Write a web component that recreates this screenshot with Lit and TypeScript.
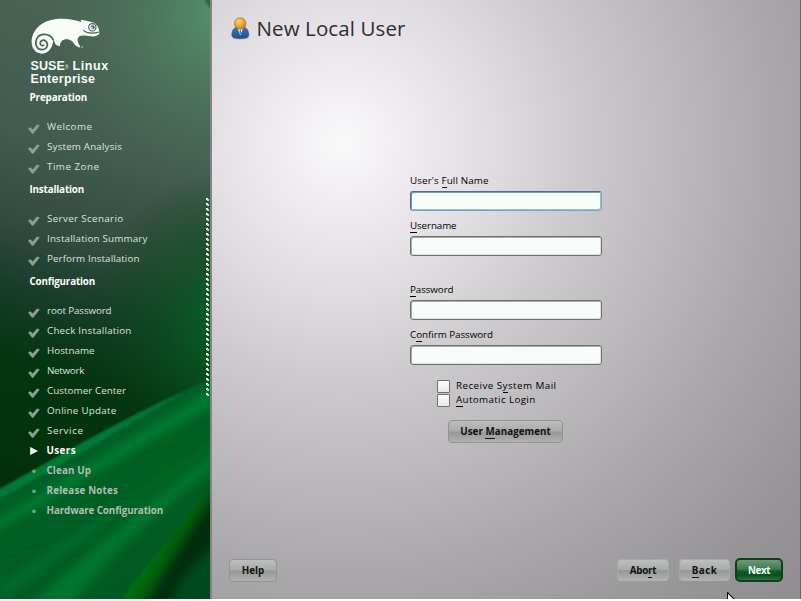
import { LitElement, html, css, svg } from "lit";
import { customElement, property } from "lit/decorators.js";
import { styleMap } from "lit/directives/style-map.js";

const ctx = document.createElement("canvas").getContext("2d")!;

/** Letter spacing that makes a text run reach the given width. */
function tracking(text: string, font: string, width: number): string {
  ctx.font = font;
  return `${((width - ctx.measureText(text).width) / text.length).toFixed(3)}px`;
}

/** Renders a label whose "_x" marks the accelerator letter. */
function mnemonic(label: string) {
  const i = label.indexOf("_");
  if (i < 0) return html`${label}`;
  return html`${label.slice(0, i)}<span class="key">${label[i + 1]}</span>${label.slice(i + 2)}`;
}

const plain = (label: string) => label.replace("_", "");
const FACE = '"Open Sans", "Noto Sans", sans-serif';

@customElement("fit-text")
class FitText extends LitElement {
  @property() label = "";
  @property({ type: Number }) width = 0;
  @property({ type: Number }) size = 10;
  @property({ type: Number }) weight = 400;

  static styles = css`
    :host { display: inline-block; white-space: pre; }
    .text { display: block; font-family: "Open Sans", "Noto Sans", sans-serif; line-height: 14px; }
    .key { position: relative; }
    .key::after {
      content: ""; position: absolute; left: 0; right: 0; bottom: -1px;
      height: 1px; background: currentColor;
    }
  `;

  render() {
    const font = `${this.weight} ${this.size}px ${FACE}`;
    return html`<span class="text" style=${styleMap({
      fontSize: `${this.size}px`,
      fontWeight: String(this.weight),
      letterSpacing: tracking(plain(this.label), font, this.width),
    })}>${mnemonic(this.label)}</span>`;
  }
}

type State = "done" | "current" | "todo";
interface Step { name: string; width: number; state: State }
interface Stage { name: string; width: number; steps: Step[] }

const step = (name: string, width: number, state: State = "done"): Step => ({ name, width, state });

const STAGES: Stage[] = [
  { name: "Preparation", width: 57.5, steps: [
    step("Welcome", 45.5), step("System Analysis", 75), step("Time Zone", 52.5),
  ] },
  { name: "Installation", width: 54.5, steps: [
    step("Server Scenario", 76.5), step("Installation Summary", 100.5), step("Perform Installation", 92.5),
  ] },
  { name: "Configuration", width: 65.5, steps: [
    step("root Password", 64.5), step("Check Installation", 84.5), step("Hostname", 47.5),
    step("Network", 37), step("Customer Center", 79), step("Online Update", 69.5),
    step("Service", 36.5), step("Users", 29.5, "current"), step("Clean Up", 44.5, "todo"),
    step("Release Notes", 71.5, "todo"), step("Hardware Configuration", 116.5, "todo"),
  ] },
];

const marks = {
  done: svg`<path d="M0 5.6 L2.4 4.2 L4.7 6.6 L9 1.4 L11.8 2.4 L5.2 10.8 L4 10.8 Z" fill="#8b9e92"/>`,
  current: svg`<path d="M2.2 2 L10 6 L2.2 10 Z" fill="#f6fbf7"/>`,
  todo: svg`<circle cx="6" cy="6.3" r="1.9" fill="#66a47d"/>`,
};

@customElement("brand-logo")
class BrandLogo extends LitElement {
  static styles = css`
    :host { display: block; height: 69px; }
    .beast { display: block; margin-left: 30px; }
    .name {
      margin: 5px 0 0 30.5px; color: #f8fcf9;
      font: bold 12.5px/13px "Liberation Sans", Arial, sans-serif;
    }
    .row { display: flex; height: 13px; letter-spacing: 0.1px; }
    .mark { font-size: 5px; opacity: 0.7; width: 4.5px; line-height: 14px; }
    .gap { margin-left: 3px; letter-spacing: 0.6px; }
    .edition { letter-spacing: 0.3px; }
  `;
  render() {
    return html`
      <svg class="beast" width="72" height="38" viewBox="90 51 216 114">
        <path fill="#f8fcf9" d="M95 127 C94 98 118 64 165 58 C195 54 222 59 244 66 L242 59 C256 61 264 63 271 65
          C288 68 298 80 298 98 C297 107 285 110 272 109 C258 108 247 104 238 109 C230 116 232 127 240 138
          L239 143 L229 138 C222 132 218 121 208 119 C194 114 179 122 180 139 L168 135 C163 129 165 124 160 121
          C158 142 146 161 127 161 C107 161 95 146 95 127 Z"/>
        <path fill="none" stroke="#476153" stroke-width="5" stroke-linecap="round"
          d="M160 120 C149 97 117 99 110 117 C103 134 112 150 127 149 C141 148 147 133 138 124 C130 116 119 123 121 132 C123 137 127 138 131 136"/>
        <path fill="none" stroke="#476153" stroke-width="3.4" d="M250 91 C262 101 280 101 297 96"/>
        <circle cx="277" cy="82" r="11" fill="none" stroke="#476153" stroke-width="3.4"/>
        <circle cx="278" cy="82" r="6" fill="#476153"/>
        <circle cx="276" cy="83" r="2.6" fill="#f8fcf9"/>
        <circle cx="246" cy="141" r="2.4" fill="#c5d0c9"/>
      </svg>
      <div class="name">
        <div class="row"><span>SUSE</span><span class="mark">®</span><span class="gap">Linux</span></div>
        <div class="edition">Enterprise</div>
      </div>
    `;
  }
}

@customElement("step-list")
class StepList extends LitElement {
  static styles = css`
    :host { display: block; }
    .stage { display: flex; align-items: center; height: 26px; padding: 0 0 6px 29.5px; color: #fff; }
    .step { display: flex; align-items: center; height: 20px; padding-left: 28px; color: #dbe4de; }
    .mark { width: 12px; height: 12px; margin-right: 7px; flex: none; }
    .done .mark { margin-top: 3px; }
    .current { color: #fff; }
    .todo { color: #b4bcb5; }
    .current .mark, .todo .mark { margin-right: 6.5px; }
  `;
  render() {
    return STAGES.map((s) => html`
      <div class="stage"><fit-text .label=${s.name} .width=${s.width} .size=${9.8} .weight=${700}></fit-text></div>
      ${s.steps.map((t) => html`
        <div class="step ${t.state}">
          <svg class="mark" viewBox="0 0 12 12">${marks[t.state]}</svg>
          <fit-text .label=${t.name} .width=${t.width} .size=${9.8} .weight=${t.state === "done" ? 400 : 700}></fit-text>
        </div>`)}
    `);
  }
}

@customElement("side-scenery")
class SideScenery extends LitElement {
  static styles = css`:host, .art { display: block; }`;
  render() {
    return html`
      <svg class="art" width="210" height="599" viewBox="0 0 210 599">
        <defs>
          <linearGradient id="base" x1="0.1" y1="0" x2="0" y2="1">
            <stop offset="0" stop-color="#486353"/>
            <stop offset="0.22" stop-color="#415b4f"/>
            <stop offset="0.37" stop-color="#324b3e"/>
            <stop offset="0.48" stop-color="#173c2a"/>
            <stop offset="0.6" stop-color="#04350e"/>
            <stop offset="0.8" stop-color="#033008"/>
            <stop offset="1" stop-color="#00551e"/>
          </linearGradient>
          <radialGradient id="top" gradientUnits="userSpaceOnUse" cx="225" cy="15" r="190">
            <stop offset="0" stop-color="#52946a"/>
            <stop offset="0.35" stop-color="#517f63" stop-opacity="0.75"/>
            <stop offset="1" stop-color="#4d6a5a" stop-opacity="0"/>
          </radialGradient>
          <radialGradient id="side" gradientUnits="userSpaceOnUse" cx="240" cy="325" r="155">
            <stop offset="0" stop-color="#066624"/>
            <stop offset="0.35" stop-color="#045a1d" stop-opacity="0.7"/>
            <stop offset="1" stop-color="#03400f" stop-opacity="0"/>
          </radialGradient>
          <linearGradient id="hill" x1="0" y1="0" x2="0.5" y2="1">
            <stop offset="0" stop-color="#00652a"/>
            <stop offset="1" stop-color="#005a20"/>
          </linearGradient>
          <linearGradient id="fold" gradientUnits="userSpaceOnUse" x1="164" y1="540" x2="200" y2="562">
            <stop offset="0" stop-color="#006d12"/>
            <stop offset="0.3" stop-color="#005a0c"/>
            <stop offset="0.65" stop-color="#002f05"/>
            <stop offset="1" stop-color="#003d10"/>
          </linearGradient>
          <filter id="b1" x="-20%" y="-20%" width="140%" height="140%"><feGaussianBlur stdDeviation="1"/></filter>
          <filter id="b4" x="-20%" y="-20%" width="140%" height="140%"><feGaussianBlur stdDeviation="4"/></filter>
        </defs>
        <rect width="210" height="599" fill="url(#base)"/>
        <rect width="210" height="210" fill="url(#top)"/>
        <rect y="150" width="210" height="330" fill="url(#side)"/>
        <path d="M204 -2 C206 4 209 7 214 12 V-2 Z" fill="#2c6b41" filter="url(#b1)"/>
        <path d="M-5 492 C55 459 125 416 215 377 V605 H-5 Z" fill="url(#hill)" filter="url(#b1)"/>
        <path d="M-5 492 C55 459 120 420 185 392 C130 423 60 466 -5 501 Z" fill="#007a35" filter="url(#b1)"/>
        <path d="M-5 521 C60 482 130 440 215 387 V405 C150 440 70 490 -5 531 Z" fill="#007a32" filter="url(#b4)"/>
        <path d="M30 605 C80 558 140 510 215 450 V468 C150 518 105 560 72 605 Z" fill="#00742f" filter="url(#b4)"/>
        <path d="M-5 588 C60 540 130 500 215 440 V447 C150 492 90 535 5 600 Z" fill="#00692a" filter="url(#b4)"/>
        <path d="M118 605 C150 560 180 525 215 481 V605 Z" fill="url(#fold)" filter="url(#b1)"/>
        <path d="M148 605 C170 570 190 535 215 510 V605 Z" fill="#002f0a" filter="url(#b4)"/>
        <path d="M165 612 C180 580 195 556 220 544 V612 Z" fill="#004a1c" filter="url(#b4)"/>
      </svg>`;
  }
}

@customElement("push-button")
class PushButton extends LitElement {
  @property() label = "";
  @property({ type: Number }) width = 0;
  @property() tone = "plain";

  static styles = css`
    :host { display: block; }
    .button {
      box-sizing: border-box; width: 100%; height: 23px; padding: 1px 0 0; display: flex;
      align-items: center; justify-content: center; color: #101211;
      border: 1px solid #929593; border-radius: 4px;
      background: linear-gradient(#bcbfbd, #a9acaa 48%, #959997 52%, #a3a6a4 80%, #b0b3b1);
    }
    .soft { border-color: #a8aaa9 #a7a9a8 #b0b3b1; height: 22px; padding-top: 2px; }
    .primary {
      height: 24px; color: #f4fbf5; border: 2px solid #123f10; border-radius: 5px;
      background: linear-gradient(#6a9a77, #3d7c50 45%, #125a2a 55%, #07501f 75%, #2b6f42);
    }
  `;
  render() {
    return html`<button class="button ${this.tone}">
      <fit-text .label=${this.label} .width=${this.width} .size=${9.8} .weight=${700}></fit-text>
    </button>`;
  }
}

@customElement("app-root")
class AppRoot extends LitElement {
  static styles = css`
    :host { display: block; width: 801px; height: 601px; overflow: hidden; background: #fff; }
    .screen { position: relative; display: flex; box-sizing: border-box; width: 801px; height: 599px; border-right: 1px solid #4c6f7c; overflow: hidden; }
    .side { position: relative; width: 210px; height: 599px; flex: none; border-right: 2px solid #858186; }
    .scenery { position: absolute; inset: 0; }
    .nav { position: relative; padding-top: 17px; }
    .steps { margin-top: -1px; }
    .dots { position: absolute; left: 206px; top: 198px; display: block; }
    .main {
      flex: 1; min-width: 0; display: flex; flex-direction: column;
      background: radial-gradient(circle at 130px 142px, #f8faf9 0, #f5f3f7 30px, #ebe7ec 90px, #dfdce0 155px, #cccacd 240px, #bcbabd 330px, #aaa8ab 430px, #989598 560px, #8e8b8e 680px);
    }
    .title { display: flex; align-items: center; height: 57px; padding-left: 18px; color: #2d2e2f; }
    .heading { margin: 0 0 2px; }
    .person { width: 20px; height: 23px; margin: 0 6.5px 1px 0; }
    .form { width: 192px; margin: 117px 0 0 198px; }
    .label { height: 14px; display: flex; margin-bottom: 3px; }
    .field {
      display: block; box-sizing: border-box; width: 192px; height: 20px; margin: 0 0 8px;
      border: 1px solid #6f6e70; border-radius: 3px; background: #f7fcf8; padding: 0 3px; outline: none;
      box-shadow: inset 1px 1px 0 #a9abaa, inset -1px -1px 0 #dfe2e0;
    }
    .focused { border-color: #4a6f92 #7fa0c0 #7c9fbf #4a6f92; box-shadow: inset 1px 1px 0 #6f9ac0, inset -1px -1px 0 #9dbcd6; }
    .spaced { margin-bottom: 27px; }
    .checks { margin: 14px 0 0 27px; }
    .check { display: flex; align-items: center; height: 14px; }
    .box { box-sizing: border-box; width: 13px; height: 13px; margin-right: 6px; border: 1px solid #6f6e70; border-radius: 1px; background: linear-gradient(#fbfdfb, #e9ebea); }
    .manage { width: 115px; margin: 13px 0 0 38px; }
    .footer { margin-top: auto; display: flex; align-items: center; height: 24px; padding: 0 17px 17px 17px; }
    .help { width: 48px; margin-right: auto; }
    .abort { width: 52px; margin-right: 10px; }
    .back { width: 51px; margin-right: 5px; }
    .next { width: 48px; }
    .cursor { position: absolute; left: 727px; top: 592px; }
  `;

  private field(label: string, width: number, extra = "") {
    return html`
      <div class="label"><fit-text .label=${label} .width=${width} .size=${9.8}></fit-text></div>
      <input class="field ${extra}" />`;
  }

  private check(label: string, width: number) {
    return html`<div class="check"><span class="box"></span><fit-text .label=${label} .width=${width} .size=${9.8}></fit-text></div>`;
  }

  render() {
    const dots = Array.from({ length: 40 }, (_, i) => svg`
      <rect x="0" y=${i * 5} width="2" height="2" fill="#f4faf5"/>
      <rect x="1" y=${i * 5 + 1} width="2" height="2" fill="#c9dacd"/>`);
    return html`
      <div class="screen">
        <aside class="side">
          <side-scenery class="scenery"></side-scenery>
          <nav class="nav">
            <brand-logo></brand-logo>
            <step-list class="steps"></step-list>
          </nav>
          <svg class="dots" width="4" height="200">${dots}</svg>
        </aside>
        <main class="main">
          <header class="title">
            <svg class="person" viewBox="0 0 20 23">
              <defs>
                <radialGradient id="head" cx="0.4" cy="0.35" r="0.65"><stop offset="0" stop-color="#fbdc8c"/><stop offset="0.55" stop-color="#eea62c"/><stop offset="1" stop-color="#c67f17"/></radialGradient>
                <linearGradient id="coat" x1="0" y1="0" x2="0" y2="1"><stop offset="0" stop-color="#3a78c0"/><stop offset="1" stop-color="#1f4f92"/></linearGradient>
              </defs>
              <ellipse cx="10.3" cy="21" rx="8.5" ry="1.5" fill="#777" opacity="0.45"/>
              <path d="M1.8 18 C2 13 4 9.5 10.3 9.5 C16.6 9.5 18.6 13 18.8 18 C18.9 20.5 15.5 21.5 10.3 21.5 C5 21.5 1.7 20.5 1.8 18 Z" fill="url(#coat)" stroke="#2a5590" stroke-width="0.6"/>
              <path d="M7.4 10.8 L10.3 18.5 L13.2 10.8 Z" fill="#f2f5f9"/>
              <path d="M9.9 12.5 H10.7 L11 16 L10.3 17.5 L9.6 16 Z" fill="#4a6a92"/>
              <circle cx="10.2" cy="6.5" r="5.8" fill="url(#head)" stroke="#a8782b" stroke-width="0.7"/>
            </svg>
            <fit-text class="heading" .label=${"New Local User"} .width=${149} .size=${20.5}></fit-text>
          </header>
          <section class="form">
            ${this.field("User's _Full Name", 78.5, "focused")}
            ${this.field("_Username", 46.5, "spaced")}
            ${this.field("_Password", 43.5)}
            ${this.field("C_onfirm Password", 83)}
            <div class="checks">
              ${this.check("Receive S_ystem Mail", 100.5)}
              ${this.check("_Automatic Login", 79.5)}
            </div>
            <push-button class="manage" .label=${"User _Management"} .width=${90.5}></push-button>
          </section>
          <footer class="footer">
            <push-button class="help" .label=${"Help"} .width=${22.5}></push-button>
            <push-button class="abort" .label=${"Abo_rt"} .width=${26.5} .tone=${"soft"}></push-button>
            <push-button class="back" .label=${"_Back"} .width=${25.5} .tone=${"soft"}></push-button>
            <push-button class="next" .label=${"Next"} .width=${22} .tone=${"primary"}></push-button>
          </footer>
        </main>
        <svg class="cursor" width="12" height="10" viewBox="0 0 12 10"><path d="M0.5 0.5 V14 L12 12 Z" fill="#f6faf7" stroke="#111" stroke-width="1.1"/></svg>
      </div>`;
  }
}
